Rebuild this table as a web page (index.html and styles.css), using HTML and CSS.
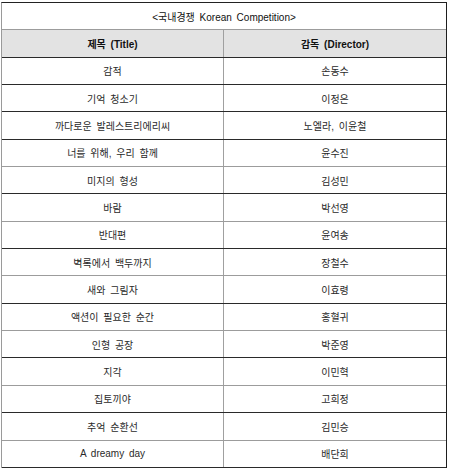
FILE: index.html
```html
<!DOCTYPE html>
<html lang="ko">
<head>
<meta charset="utf-8">
<title>국내경쟁 Korean Competition</title>
<link rel="stylesheet" href="styles.css">
</head>
<body>
<div class="table">
  <div class="row caption soft">&lt;국내경쟁 Korean Competition&gt;</div>
  <div class="row head"><div class="cell">제목 (Title)</div><div class="cell">감독 (Director)</div></div>
  <div class="row"><div class="cell">감적</div><div class="cell">손동수</div></div>
  <div class="row"><div class="cell">기억 청소기</div><div class="cell">이정은</div></div>
  <div class="row"><div class="cell">까다로운 발레스트리에리씨</div><div class="cell">노엘라, 이윤철</div></div>
  <div class="row soft"><div class="cell">너를 위해, 우리 함께</div><div class="cell">윤수진</div></div>
  <div class="row"><div class="cell">미지의 형성</div><div class="cell">김성민</div></div>
  <div class="row soft"><div class="cell">바람</div><div class="cell">박선영</div></div>
  <div class="row"><div class="cell">반대편</div><div class="cell">윤여송</div></div>
  <div class="row soft"><div class="cell">벽록에서 백두까지</div><div class="cell">장철수</div></div>
  <div class="row"><div class="cell">새와 그림자</div><div class="cell">이효령</div></div>
  <div class="row soft"><div class="cell">액션이 필요한 순간</div><div class="cell">홍혈귀</div></div>
  <div class="row"><div class="cell">인형 공장</div><div class="cell">박준영</div></div>
  <div class="row soft"><div class="cell">지각</div><div class="cell">이민혁</div></div>
  <div class="row"><div class="cell">집토끼야</div><div class="cell">고희정</div></div>
  <div class="row soft"><div class="cell">추억 순환선</div><div class="cell">김민승</div></div>
  <div class="row"><div class="cell">A dreamy day</div><div class="cell">배단희</div></div>
</div>
</body>
</html>
```

FILE: styles.css
```css
html, body {
  margin: 0;
  padding: 0;
  background: #ffffff;
}

body {
  font-family: "Liberation Sans", "Noto Sans CJK KR", sans-serif;
  font-size: 10px;
  word-spacing: 2px;
  color: #2a2a2a;
}

.table {
  margin: 2px 0 0 1px;
  width: 446px;
  box-sizing: border-box;
  border-top: 1px solid #222222;
  border-left: 1px solid #9a9a9a;
  border-right: 1px solid #1e1e1e;
}

.row {
  display: grid;
  grid-template-columns: 222px 1fr;
  height: 27.35px;
  box-sizing: border-box;
  border-bottom: 1px solid #2a2a2a;
}

.row.soft {
  border-bottom-color: #9c9c9c;
}

.cell {
  display: flex;
  align-items: center;
  justify-content: center;
  white-space: nowrap;
}

.cell:first-child {
  border-right: 1px solid #a0a0a0;
}

.caption {
  display: flex;
  align-items: center;
  justify-content: center;
  color: #111111;
  padding-top: 1px;
}

.head {
  background: #e3e3e3;
  font-weight: bold;
  color: #111111;
}
```
